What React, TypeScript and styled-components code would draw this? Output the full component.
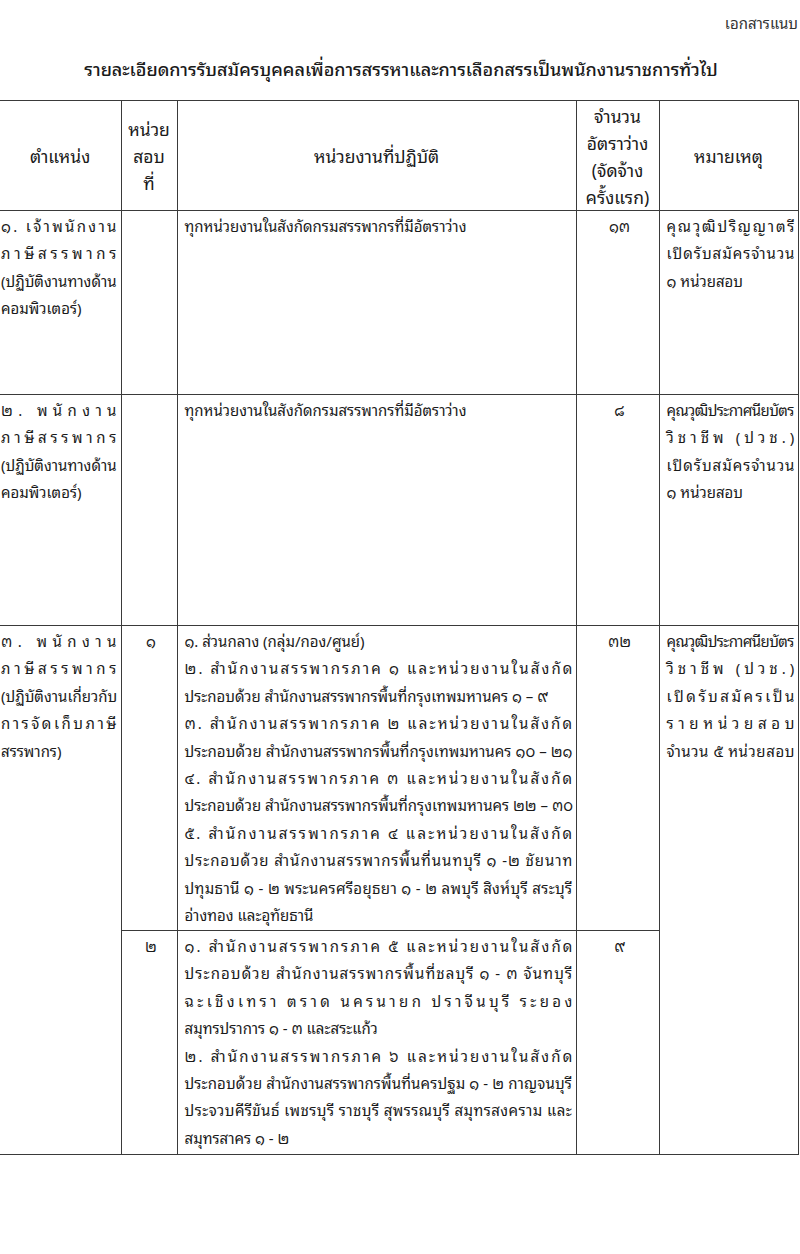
import React from "react";
import styled, { createGlobalStyle } from "styled-components";

const GlobalStyle = createGlobalStyle`
  html, body {
    margin: 0;
    padding: 0;
    background: #ffffff;
  }
  body {
    font-family: "Noto Sans Thai Looped", "Noto Sans Thai", "Noto Sans", "DejaVu Sans", sans-serif;
    color: #1a1a1a;
  }
`;

const Page = styled.div`
  width: 800px;
  height: 1254px;
  overflow: hidden;
  padding-top: 12px;
  box-sizing: border-box;
`;

const Attachment = styled.div`
  text-align: right;
  font-size: 15px;
  line-height: 20px;
  color: #333;
  padding-right: 2px;
`;

const Title = styled.h1`
  margin: 21px 0 17px;
  text-align: center;
  font-size: 18px;
  font-weight: 500;
  line-height: 30px;
  padding-left: 2px;
`;

const Table = styled.table`
  width: 798px;
  border-collapse: collapse;
  table-layout: fixed;
  font-size: 15px;
`;

const Col = styled.col<{ $w: number }>`
  width: ${(p) => p.$w}px;
`;

const Row = styled.tr<{ $h: number }>`
  height: ${(p) => p.$h}px;
`;

const HeadCell = styled.th<{ $first?: boolean }>`
  border: 1px solid #3a3a3a;
  border-left: ${(p) => (p.$first ? "none" : "1px solid #3a3a3a")};
  font-size: 17.5px;
  font-weight: 400;
  line-height: 27px;
  text-align: center;
  vertical-align: middle;
  padding: 0;
  white-space: nowrap;
`;

const Cell = styled.td<{ $first?: boolean; $center?: boolean }>`
  border: 1px solid #3a3a3a;
  border-left: ${(p) => (p.$first ? "none" : "1px solid #3a3a3a")};
  vertical-align: top;
  text-align: ${(p) => (p.$center ? "center" : "left")};
  line-height: 27.4px;
  padding: ${(p) => (p.$first ? "1px 4px 1px 1px" : "1px 3px 1px 7px")};
  white-space: nowrap;
  overflow: hidden;
`;

const LineBox = styled.div<{ $spread?: boolean; $tight?: boolean }>`
  display: ${(p) => (p.$spread ? "flex" : "block")};
  justify-content: space-between;
  white-space: nowrap;
  letter-spacing: ${(p) => (p.$tight ? "-0.6px" : "0")};

  span {
    white-space: pre;
  }
`;

const splitGraphemes = (text: string): string[] => {
  const Seg = (Intl as any).Segmenter;
  if (Seg) {
    const seg = new Seg("th", { granularity: "grapheme" });
    return Array.from(seg.segment(text), (s: any) => s.segment as string);
  }
  return Array.from(text);
};

type LineSpec = string | { t: string; s?: boolean; tight?: boolean };

// a line is either plain text or spread out across the whole cell, like the scan's Thai distributed lines
const Lines = ({ items }: { items: LineSpec[] }) => (
  <>
    {items.map((it, i) =>
      typeof it === "string" ? (
        <LineBox key={i}>{it}</LineBox>
      ) : it.s ? (
        <LineBox key={i} $spread $tight={it.tight}>
          {splitGraphemes(it.t).map((g, j) => (
            <span key={j}>{g}</span>
          ))}
        </LineBox>
      ) : (
        <LineBox key={i} $tight={it.tight}>
          {it.t}
        </LineBox>
      )
    )}
  </>
);

const sp = (t: string): LineSpec => ({ t, s: true });
const tight = (t: string): LineSpec => ({ t, tight: true });

export default function App() {
  return (
    <Page>
      <GlobalStyle />
      <Attachment>เอกสารแนบ</Attachment>
      <Title>
        รายละเอียดการรับสมัครบุคคลเพื่อการสรรหาและการเลือกสรรเป็นพนักงานราชการทั่วไป
      </Title>
      <Table>
        <colgroup>
          <Col $w={121} />
          <Col $w={56} />
          <Col $w={399} />
          <Col $w={83} />
          <Col $w={139} />
        </colgroup>
        <thead>
          <Row $h={110}>
            <HeadCell $first>ตำแหน่ง</HeadCell>
            <HeadCell>
              หน่วย
              <br />
              สอบ
              <br />
              ที่
            </HeadCell>
            <HeadCell>หน่วยงานที่ปฏิบัติ</HeadCell>
            <HeadCell>
              จำนวน
              <br />
              อัตราว่าง
              <br />
              (จัดจ้าง
              <br />
              ครั้งแรก)
            </HeadCell>
            <HeadCell>หมายเหตุ</HeadCell>
          </Row>
        </thead>
        <tbody>
          <Row $h={184}>
            <Cell $first>
              <Lines
                items={[
                  sp("๑. เจ้าพนักงาน"),
                  sp("ภาษีสรรพากร"),
                  sp("(ปฏิบัติงานทางด้าน"),
                  "คอมพิวเตอร์)",
                ]}
              />
            </Cell>
            <Cell />
            <Cell>
              <Lines items={["ทุกหน่วยงานในสังกัดกรมสรรพากรที่มีอัตราว่าง"]} />
            </Cell>
            <Cell $center>๑๓</Cell>
            <Cell>
              <Lines
                items={[sp("คุณวุฒิปริญญาตรี"), sp("เปิดรับสมัครจำนวน"), "๑ หน่วยสอบ"]}
              />
            </Cell>
          </Row>
          <Row $h={231}>
            <Cell $first>
              <Lines
                items={[
                  sp("๒. พนักงาน"),
                  sp("ภาษีสรรพากร"),
                  sp("(ปฏิบัติงานทางด้าน"),
                  "คอมพิวเตอร์)",
                ]}
              />
            </Cell>
            <Cell />
            <Cell>
              <Lines items={["ทุกหน่วยงานในสังกัดกรมสรรพากรที่มีอัตราว่าง"]} />
            </Cell>
            <Cell $center>๘</Cell>
            <Cell>
              <Lines
                items={[
                  tight("คุณวุฒิประกาศนียบัตร"),
                  sp("วิชาชีพ (ปวช.)"),
                  sp("เปิดรับสมัครจำนวน"),
                  "๑ หน่วยสอบ",
                ]}
              />
            </Cell>
          </Row>
          <Row $h={305}>
            <Cell $first rowSpan={2}>
              <Lines
                items={[
                  sp("๓. พนักงาน"),
                  sp("ภาษีสรรพากร"),
                  sp("(ปฏิบัติงานเกี่ยวกับ"),
                  sp("การจัดเก็บภาษี"),
                  "สรรพากร)",
                ]}
              />
            </Cell>
            <Cell $center>๑</Cell>
            <Cell>
              <Lines
                items={[
                  "๑. ส่วนกลาง (กลุ่ม/กอง/ศูนย์)",
                  sp("๒. สำนักงานสรรพากรภาค ๑ และหน่วยงานในสังกัด"),
                  "ประกอบด้วย สำนักงานสรรพากรพื้นที่กรุงเทพมหานคร ๑ – ๙",
                  sp("๓. สำนักงานสรรพากรภาค ๒ และหน่วยงานในสังกัด"),
                  sp("ประกอบด้วย สำนักงานสรรพากรพื้นที่กรุงเทพมหานคร ๑๐ – ๒๑"),
                  sp("๔. สำนักงานสรรพากรภาค ๓ และหน่วยงานในสังกัด"),
                  sp("ประกอบด้วย สำนักงานสรรพากรพื้นที่กรุงเทพมหานคร ๒๒ – ๓๐"),
                  sp("๕. สำนักงานสรรพากรภาค ๔ และหน่วยงานในสังกัด"),
                  sp("ประกอบด้วย สำนักงานสรรพากรพื้นที่นนทบุรี ๑ -๒ ชัยนาท"),
                  sp("ปทุมธานี ๑ - ๒ พระนครศรีอยุธยา ๑ - ๒ ลพบุรี สิงห์บุรี สระบุรี"),
                  "อ่างทอง และอุทัยธานี",
                ]}
              />
            </Cell>
            <Cell $center>๓๒</Cell>
            <Cell rowSpan={2}>
              <Lines
                items={[
                  tight("คุณวุฒิประกาศนียบัตร"),
                  sp("วิชาชีพ (ปวช.)"),
                  sp("เปิดรับสมัครเป็น"),
                  sp("รายหน่วยสอบ"),
                  sp("จำนวน ๕ หน่วยสอบ"),
                ]}
              />
            </Cell>
          </Row>
          <Row $h={224}>
            <Cell $center>๒</Cell>
            <Cell>
              <Lines
                items={[
                  sp("๑. สำนักงานสรรพากรภาค ๕ และหน่วยงานในสังกัด"),
                  sp("ประกอบด้วย สำนักงานสรรพากรพื้นที่ชลบุรี ๑ - ๓ จันทบุรี"),
                  sp("ฉะเชิงเทรา ตราด นครนายก ปราจีนบุรี ระยอง"),
                  "สมุทรปราการ ๑ - ๓ และสระแก้ว",
                  sp("๒. สำนักงานสรรพากรภาค ๖ และหน่วยงานในสังกัด"),
                  sp("ประกอบด้วย สำนักงานสรรพากรพื้นที่นครปฐม ๑ - ๒ กาญจนบุรี"),
                  sp("ประจวบคีรีขันธ์ เพชรบุรี ราชบุรี สุพรรณบุรี สมุทรสงคราม และ"),
                  "สมุทรสาคร ๑ - ๒",
                ]}
              />
            </Cell>
            <Cell $center>๙</Cell>
          </Row>
        </tbody>
      </Table>
    </Page>
  );
}
